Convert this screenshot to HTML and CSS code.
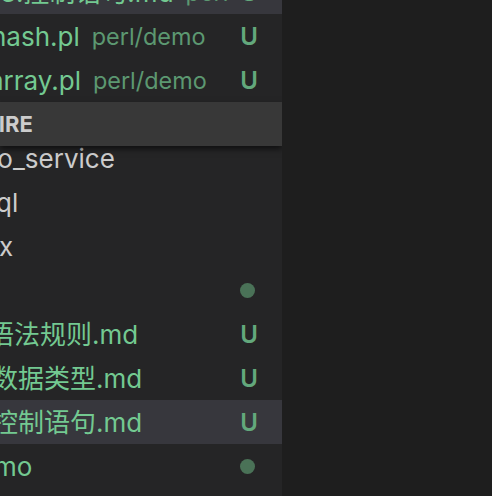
FILE: index.html
```html
<!DOCTYPE html>
<html lang="zh">
<head>
<meta charset="utf-8">
<title>Explorer</title>
<link rel="stylesheet" href="styles.css">
</head>
<body>
<div class="window">
  <aside class="sidebar">
    <ul class="list editors">
      <li class="row selected top-row">
        <span class="name untracked cut-top">03.控制语句.md</span>
        <span class="desc">perl/demo</span>
        <span class="badge">U</span>
      </li>
      <li class="row">
        <span class="name untracked cut-hash">hash.pl</span>
        <span class="desc">perl/demo</span>
        <span class="badge">U</span>
      </li>
      <li class="row">
        <span class="name untracked cut-array">array.pl</span>
        <span class="desc">perl/demo</span>
        <span class="badge">U</span>
      </li>
    </ul>
    <div class="section-header"><span class="header-title">ENTIRE</span></div>
    <ul class="list tree">
      <li class="row">
        <span class="name plain cut-service">ro_service</span>
      </li>
      <li class="row">
        <span class="name plain cut-sql">ql</span>
      </li>
      <li class="row">
        <span class="name plain cut-x">x</span>
      </li>
      <li class="row">
        <span class="name plain"></span>
        <span class="badge"><span class="dot"></span></span>
      </li>
      <li class="row">
        <span class="name untracked cut-cn1">语法规则.md</span>
        <span class="badge">U</span>
      </li>
      <li class="row">
        <span class="name untracked cut-cn2">数据类型.md</span>
        <span class="badge">U</span>
      </li>
      <li class="row selected">
        <span class="name untracked cut-cn3">控制语句.md</span>
        <span class="badge">U</span>
      </li>
      <li class="row">
        <span class="name untracked cut-mo">mo</span>
        <span class="badge"><span class="dot"></span></span>
      </li>
      <li class="row">
        <span class="name plain"></span>
      </li>
    </ul>
  </aside>
  <main class="editor"></main>
</div>
</body>
</html>
```
FILE: styles.css
```css
* { box-sizing: border-box; }
html, body {
  margin: 0;
  padding: 0;
  height: 100%;
  background: #1e1e1e;
  font-family: Inter, "Noto Sans CJK SC", sans-serif;
}
.window {
  display: flex;
  height: 496px;
  overflow: hidden;
}
.sidebar {
  width: 282px;
  flex: none;
  background: #252526;
  overflow: hidden;
  display: flex;
  flex-direction: column;
}
.editor {
  flex: 1;
  background: #1e1e1e;
}
.list {
  list-style: none;
  margin: 0;
  padding: 0;
}
.editors {
  margin-top: -30px;
}
.row {
  height: 44px;
  display: flex;
  align-items: center;
  white-space: nowrap;
  font-size: 26px;
  line-height: 44px;
  padding-top: 1px;
}
.row.selected { background: #37373d; }
.name {
  flex: none;
}
.name.untracked { color: #73c991; }
.name.plain { color: #cccccc; }
.desc {
  flex: 1;
  min-width: 0;
  overflow: hidden;
  text-overflow: clip;
  font-size: 23.4px;
  color: #5c9871;
  margin-left: 12px;
  margin-right: 6px;
}
.badge {
  flex: none;
  margin-left: auto;
  width: 30px;
  margin-right: 18px;
  text-align: center;
  font-size: 24px;
  font-weight: 600;
  color: #63a87c;
  display: flex;
  align-items: center;
  justify-content: center;
}
.dot {
  width: 15px;
  height: 15px;
  border-radius: 50%;
  background: #4a7257;
  margin-right: 4px;
}
.section-header {
  position: relative;
  z-index: 1;
  height: 44px;
  flex: none;
  background: #383838;
  box-shadow: 0 3px 6px rgba(0,0,0,0.6);
  display: flex;
  align-items: center;
  overflow: hidden;
}
.header-title {
  font-size: 22px;
  font-weight: 700;
  color: #cccccc;
  margin-left: -46px;
}
.tree {
  margin-top: -10px;
}
.cut-top { margin-left: -16px; }
.cut-hash { margin-left: -9px; }
.cut-array { margin-left: -11px; }
.cut-service { margin-left: -12px; }
.cut-sql { margin-left: -4px; }
.cut-x { margin-left: -1px; }
.cut-cn1 { margin-left: -12px; }
.cut-cn2 { margin-left: -8px; }
.cut-cn3 { margin-left: -8px; }
.cut-mo { margin-left: -6px; }
```
